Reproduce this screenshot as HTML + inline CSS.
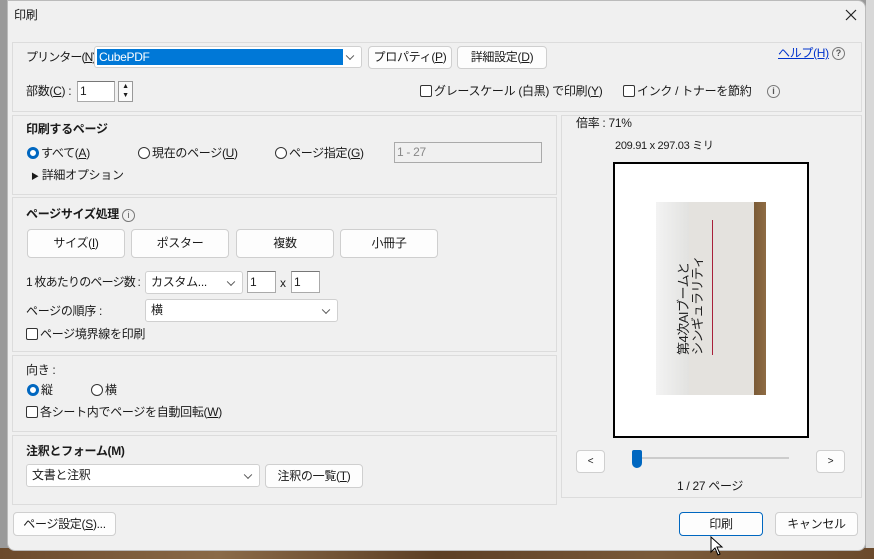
<!DOCTYPE html><html><head><meta charset="utf-8"><style>
*{box-sizing:border-box;margin:0;padding:0}
body{width:874px;height:559px;overflow:hidden;background:#9a9a9a;font-family:"Liberation Sans","Noto Sans CJK JP",sans-serif;font-size:12px;line-height:15px;color:#1a1a1a;position:relative;letter-spacing:-0.3px}
.a{position:absolute;white-space:nowrap}
#dlg{position:absolute;left:7px;top:0;width:859px;height:551px;background:#f0f0f0;border-radius:0 8px 8px 8px;border:1px solid #bbb}
.p{position:absolute;border:1px solid #dcdcdc;background:#f0f0f0}
.btn{position:absolute;background:#fdfdfd;border:1px solid #cfcfcf;border-radius:4px;text-align:center;font-size:12px;white-space:nowrap}
.in{position:absolute;background:#fff;border:1px solid #aaa;border-top-color:#777;padding-left:2px;font-size:12px}
.sel{position:absolute;background:#fff;border:1px solid #d0d0d0;border-radius:3px;padding-left:5px;font-size:12px;white-space:nowrap}
.sel:after{content:"";position:absolute;right:8px;top:50%;width:5px;height:5px;border-right:1px solid #555;border-bottom:1px solid #555;transform:translateY(-70%) rotate(45deg)}
.cb{display:inline-block;width:12px;height:12px;border:1px solid #333;border-radius:2px;vertical-align:-2px;margin-right:2px;background:#fff}
.rb{display:inline-block;width:12px;height:12px;border:1px solid #333;border-radius:50%;vertical-align:-2px;margin-right:2px;background:#fff}
.rb.on{border:3.5px solid #0067c0}
.h{font-weight:bold;font-size:12px}
u{text-decoration:underline}
.info{display:inline-block;width:13px;height:13px;border:1px solid #777;border-radius:50%;font-size:9px;text-align:center;line-height:11px;color:#555;font-weight:bold;letter-spacing:0}
</style></head><body>
<div class="a" style="left:0;top:548px;width:874px;height:11px;background:linear-gradient(90deg,#6b4a2c,#8a6a48,#5c3f25,#7a5a3a,#6b4a2c)"></div>
<div class="a" style="left:866px;top:0;width:8px;height:548px;background:#d8d8d8"></div>
<div id="dlg"></div>
<div class="a" style="left:14px;top:8px">印刷</div>
<svg class="a" style="left:845px;top:9px" width="12" height="12"><path d="M1 1L11 11M11 1L1 11" stroke="#222" stroke-width="1.2"/></svg>

<div class="p" style="left:12px;top:42px;width:850px;height:70px"></div>
<div class="a" style="left:26px;top:50px;letter-spacing:-0.9px">プリンター(<u>N</u>) :</div>
<div class="sel" style="left:94px;top:46px;width:268px;height:22px;padding-left:0"><div style="position:absolute;left:2px;top:2px;width:246px;height:16px;background:#0078d7;color:#fff;padding-left:2px;line-height:16px">CubePDF</div></div>
<div class="btn" style="left:368px;top:46px;width:84px;height:23px;line-height:21px">プロパティ(<u>P</u>)</div>
<div class="btn" style="left:457px;top:46px;width:90px;height:23px;line-height:21px">詳細設定(<u>D</u>)</div>
<div class="a" style="left:778px;top:46px;color:#0033cc"><u>ヘルプ(H)</u></div>
<div class="a" style="left:832px;top:45px"><span class="info">?</span></div>
<div class="a" style="left:26px;top:84px">部数(<u>C</u>) :</div>
<div class="in" style="left:77px;top:81px;width:38px;height:21px;line-height:19px">1</div>
<div class="a" style="left:118px;top:81px;width:15px;height:21px;border:1px solid #999;background:#fafafa;font-size:7px;line-height:9px;text-align:center">▲<br>▼</div>
<div class="a" style="left:420px;top:84px"><span class="cb"></span>グレースケール (白黒) で印刷(<u>Y</u>)</div>
<div class="a" style="left:623px;top:84px"><span class="cb"></span>インク / トナーを節約</div>
<div class="a" style="left:767px;top:83px"><span class="info">i</span></div>

<div class="p" style="left:12px;top:115px;width:545px;height:80px"></div>
<div class="a h" style="left:26px;top:122px">印刷するページ</div>
<div class="a" style="left:27px;top:146px"><span class="rb on"></span>すべて(<u>A</u>)</div>
<div class="a" style="left:138px;top:146px"><span class="rb"></span>現在のページ(<u>U</u>)</div>
<div class="a" style="left:275px;top:146px"><span class="rb"></span>ページ指定(<u>G</u>)</div>
<div class="in" style="left:394px;top:142px;width:148px;height:21px;background:#f0f0f0;color:#888;line-height:19px;border-color:#aaa">1 - 27</div>
<div class="a" style="left:31px;top:168px"><span style="font-size:8px">▶</span> 詳細オプション</div>

<div class="p" style="left:12px;top:197px;width:545px;height:155px"></div>
<div class="a h" style="left:26px;top:207px">ページサイズ処理 <span class="info" style="font-weight:normal">i</span></div>
<div class="btn" style="left:27px;top:229px;width:98px;height:29px;line-height:27px">サイズ(<u>I</u>)</div>
<div class="btn" style="left:131px;top:229px;width:98px;height:29px;line-height:27px">ポスター</div>
<div class="btn" style="left:236px;top:229px;width:98px;height:29px;line-height:27px">複数</div>
<div class="btn" style="left:340px;top:229px;width:98px;height:29px;line-height:27px">小冊子</div>
<div class="a" style="left:26px;top:275px;letter-spacing:-0.8px">1 枚あたりのページ数 :</div>
<div class="sel" style="left:145px;top:271px;width:98px;height:23px;line-height:21px">カスタム...</div>
<div class="in" style="left:247px;top:271px;width:29px;height:22px;line-height:20px">1</div>
<div class="a" style="left:280px;top:276px">x</div>
<div class="in" style="left:291px;top:271px;width:29px;height:22px;line-height:20px">1</div>
<div class="a" style="left:26px;top:304px">ページの順序 :</div>
<div class="sel" style="left:145px;top:299px;width:193px;height:23px;line-height:21px">横</div>
<div class="a" style="left:26px;top:327px"><span class="cb"></span>ページ境界線を印刷</div>

<div class="p" style="left:12px;top:355px;width:545px;height:77px"></div>
<div class="a" style="left:26px;top:363px">向き :</div>
<div class="a" style="left:27px;top:383px"><span class="rb on"></span>縦</div>
<div class="a" style="left:91px;top:383px"><span class="rb"></span>横</div>
<div class="a" style="left:26px;top:405px"><span class="cb"></span>各シート内でページを自動回転(<u>W</u>)</div>

<div class="p" style="left:12px;top:435px;width:545px;height:70px"></div>
<div class="a h" style="left:26px;top:444px">注釈とフォーム(M)</div>
<div class="sel" style="left:26px;top:464px;width:234px;height:23px;line-height:21px">文書と注釈</div>
<div class="btn" style="left:265px;top:464px;width:98px;height:24px;line-height:22px">注釈の一覧(<u>T</u>)</div>

<div class="p" style="left:561px;top:115px;width:301px;height:383px"></div>
<div class="a" style="left:576px;top:116px">倍率 : 71%</div>
<div class="a" style="left:615px;top:139px;font-size:11px">209.91 x 297.03 ミリ</div>
<div class="a" style="left:613px;top:162px;width:196px;height:276px;border:2px solid #000;background:#fff"></div>
<div class="a" style="left:656px;top:202px;width:110px;height:193px;background:linear-gradient(90deg,#f3f3f3 0,#e2e2e0 30%,#e4e2de 30%,#e4e2de 89%,#7a5a36 89%,#8f6c44 100%)"></div>
<div class="a" style="left:712px;top:220px;width:1px;height:135px;background:#a8203a"></div>
<div class="a" style="left:642px;top:290px;width:100px;height:30px;transform:rotate(-90deg);transform-origin:center;font-size:13px;line-height:14px;color:#222;letter-spacing:-0.5px">第4次AIブームと<br>シンギュラリティ</div>
<div class="btn" style="left:576px;top:450px;width:29px;height:23px;line-height:21px;font-size:10px">&lt;</div>
<div class="btn" style="left:816px;top:450px;width:29px;height:23px;line-height:21px;font-size:10px">&gt;</div>
<div class="a" style="left:632px;top:457px;width:157px;height:2px;background:#ccc"></div>
<div class="a" style="left:632px;top:450px;width:10px;height:18px;background:#0067c0;border-radius:2px 2px 5px 5px"></div>
<div class="a" style="left:677px;top:479px">1 / 27 ページ</div>

<div class="btn" style="left:13px;top:512px;width:103px;height:24px;line-height:22px">ページ設定(<u>S</u>)...</div>
<div class="btn" style="left:679px;top:512px;width:84px;height:24px;line-height:22px;border:1px solid #0067c0">印刷</div>
<div class="btn" style="left:775px;top:512px;width:83px;height:24px;line-height:22px">キャンセル</div>
<svg class="a" style="left:710px;top:536px" width="14" height="20"><path d="M1 1L1 16L5 12L8 19L10 18L7 11L12 11Z" fill="#fff" stroke="#000" stroke-width="1"/></svg>
</body></html>
